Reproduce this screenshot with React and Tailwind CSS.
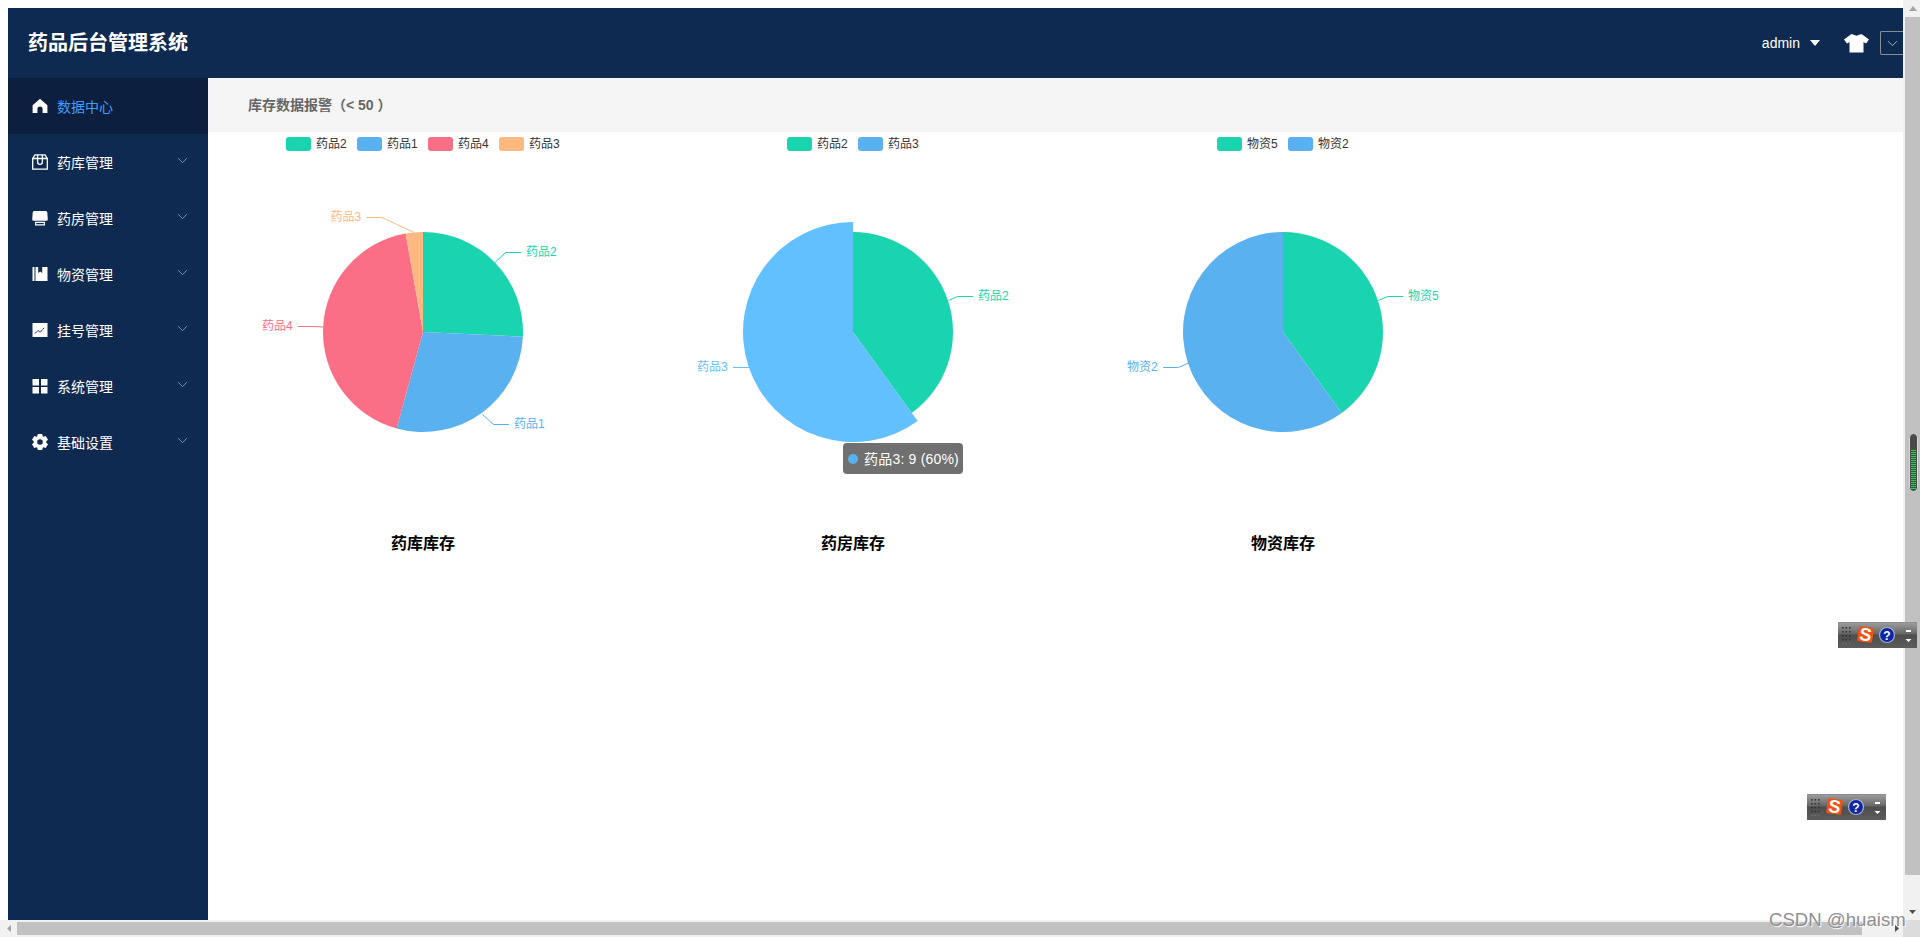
import { ChevronDown } from 'lucide-react'

const TEAL = '#19d4ae'
const BLUE = '#5ab1ef'
const PINK = '#fa6e86'
const ORANGE = '#ffb980'
const HOVER_BLUE = '#62c0ff'

const FONT = "font-['Liberation_Sans','Noto_Sans_CJK_SC',sans-serif]"

// angle is degrees clockwise from 12 o'clock
function slicePath(cx, cy, r, from, to) {
  const point = (deg) => {
    const rad = ((deg - 90) * Math.PI) / 180
    return [cx + r * Math.cos(rad), cy + r * Math.sin(rad)]
  }
  const [x1, y1] = point(from)
  const [x2, y2] = point(to)
  const large = to - from > 180 ? 1 : 0
  return `M${cx} ${cy}L${x1} ${y1}A${r} ${r} 0 ${large} 1 ${x2} ${y2}Z`
}

const charts = [
  {
    title: '药库库存',
    legend: [
      { name: '药品2', color: TEAL, x: 78 },
      { name: '药品1', color: BLUE, x: 149 },
      { name: '药品4', color: PINK, x: 220 },
      { name: '药品3', color: ORANGE, x: 291 },
    ],
    slices: [
      { color: TEAL, from: 0, to: 92.7 },
      { color: BLUE, from: 92.7, to: 195.3 },
      { color: PINK, from: 195.3, to: 350 },
      { color: ORANGE, from: 350, to: 360 },
    ],
    labels: [
      { name: '药品2', color: TEAL, line: '287,130.5 297.5,120.5 313,120.5', x: 318, y: 120, anchor: 'start' },
      { name: '药品1', color: BLUE, line: '274.5,282.5 285.5,292.5 301,292.5', x: 306, y: 292, anchor: 'start' },
      { name: '药品4', color: PINK, line: '115.5,195 105.5,194.5 90,194.5', x: 84.7, y: 194, anchor: 'end' },
      { name: '药品3', color: ORANGE, line: '206,100.5 174,85.5 158.5,85.5', x: 153.3, y: 85, anchor: 'end' },
    ],
  },
  {
    title: '药房库存',
    legend: [
      { name: '药品2', color: TEAL, x: 149 },
      { name: '药品3', color: BLUE, x: 220 },
    ],
    slices: [
      { color: TEAL, from: 0, to: 144 },
      { color: HOVER_BLUE, from: 144, to: 360, r: 110 },
    ],
    labels: [
      { name: '药品2', color: TEAL, line: '310.5,168.5 319.5,164.5 335,164.5', x: 340, y: 164, anchor: 'start' },
      { name: '药品3', color: HOVER_BLUE, line: '111,235.5 95,235.5', x: 89.7, y: 235, anchor: 'end' },
    ],
    tooltip: '药品3: 9 (60%)',
  },
  {
    title: '物资库存',
    legend: [
      { name: '物资5', color: TEAL, x: 149 },
      { name: '物资2', color: BLUE, x: 220 },
    ],
    slices: [
      { color: TEAL, from: 0, to: 144 },
      { color: BLUE, from: 144, to: 360 },
    ],
    labels: [
      { name: '物资5', color: TEAL, line: '310.5,168.5 319.5,164.5 335,164.5', x: 340, y: 164, anchor: 'start' },
      { name: '物资2', color: BLUE, line: '120.5,231 110.5,235.5 95,235.5', x: 89.7, y: 235, anchor: 'end' },
    ],
  },
]

function PieChart({ chart }) {
  return (
    <div className="w-[430px] shrink-0">
      <div className="relative h-[400px]">
        <svg width="430" height="400" viewBox="0 0 430 400" className="block">
          {chart.legend.map((item) => (
            <g key={item.name}>
              <rect x={item.x} y="5" width="25" height="14" rx="3" fill={item.color} />
              <text x={item.x + 30} y="12" dominantBaseline="central" fontSize="12" fill="#333">
                {item.name}
              </text>
            </g>
          ))}
          {chart.labels.map((label) => (
            <g key={label.name}>
              <polyline points={label.line} fill="none" stroke={label.color} strokeWidth="1" />
              <text x={label.x} y={label.y} textAnchor={label.anchor} dominantBaseline="central" fontSize="12" fill={label.color}>
                {label.name}
              </text>
            </g>
          ))}
          {chart.slices.map((slice) => (
            <path key={slice.from} d={slicePath(215, 200, slice.r || 100, slice.from, slice.to)} fill={slice.color} />
          ))}
        </svg>
        {chart.tooltip && (
          <div className="absolute left-[205px] top-[311px] flex h-[31px] w-[120px] items-center rounded bg-[#707070] pl-[5px] text-sm tracking-[0.2px] whitespace-nowrap text-white">
            <span className="mr-[6px] h-[10px] w-[10px] rounded-full bg-[#5ab1ef]" />
            {chart.tooltip}
          </div>
        )}
      </div>
      <div className="h-[22px] pt-[1px] text-center text-base leading-[22px] font-bold text-black">{chart.title}</div>
    </div>
  )
}

const HomeIcon = () => (
  <svg width="16" height="16" viewBox="0 0 16 16" fill="#fff">
    <path d="M8 .8 15.4 7.2V15H10.6V11A2.6 2.6 0 0 0 5.4 11V15H.6V7.2Z" />
  </svg>
)
const BagIcon = () => (
  <svg width="16" height="16" viewBox="0 0 16 16" fill="none" stroke="#fff" strokeWidth="1.3">
    <path d="M3 .8H13L15.3 4.5V15.2H.7V4.5ZM.7 4.5H15.3M5.6 .8V8A2.4 2.4 0 0 0 10.4 8V.8" />
  </svg>
)
const ShopIcon = () => (
  <svg width="16" height="16" viewBox="0 0 16 16" fill="#fff">
    <path d="M2.2 1H13.8A1.5 1.5 0 0 1 15.3 2.5L15.8 9.8A1.5 1.5 0 0 1 14.5 10.8H1.5A1.5 1.5 0 0 1 .2 9.8L.7 2.5A1.5 1.5 0 0 1 2.2 1Z" />
    <path d="M3 11.8H13V15.5H3ZM4.2 13V14.3H11.8V13Z" fillRule="evenodd" />
  </svg>
)
const BookIcon = () => (
  <svg width="16" height="16" viewBox="0 0 16 16" fill="#fff">
    <path d="M.5 1H2.5V15H.5ZM3.5 1H6.2V7L8.2 5.5 10.2 7V1H15.5V15H3.5Z" />
  </svg>
)
const LineIcon = () => (
  <svg width="16" height="16" viewBox="0 0 16 16">
    <rect x=".5" y="1" width="15" height="14" fill="#fff" />
    <path d="M3 11.5 6 8.5 8.3 10.3 12 5.8" fill="none" stroke="#0f2a50" strokeWidth="1" strokeDasharray="3 .6" />
  </svg>
)
const GridIcon = () => (
  <svg width="16" height="16" viewBox="0 0 16 16" fill="#fff">
    <rect x=".5" y="1" width="6.5" height="6.5" />
    <rect x="9" y="1" width="6.5" height="6.5" />
    <rect x=".5" y="9" width="6.5" height="6.5" />
    <rect x="9" y="9" width="6.5" height="6.5" />
  </svg>
)
const GearIcon = () => (
  <svg width="16" height="16" viewBox="0 0 16 16">
    <path
      fill="#fff"
      fillRule="evenodd"
      d="M5.8 0H10.2L10.7 2.2 11.5 2.7 13.7 2 16 5.8 14.3 7.3V8.7L16 10.2 13.7 14 11.5 13.3 10.7 13.8 10.2 16H5.8L5.3 13.8 4.5 13.3 2.3 14 0 10.2 1.7 8.7V7.3L0 5.8 2.3 2 4.5 2.7 5.3 2.2ZM8 5.2A2.8 2.8 0 1 0 8 10.8 2.8 2.8 0 1 0 8 5.2Z"
    />
  </svg>
)

const menu = [
  { name: '数据中心', icon: HomeIcon, active: true },
  { name: '药库管理', icon: BagIcon },
  { name: '药房管理', icon: ShopIcon },
  { name: '物资管理', icon: BookIcon },
  { name: '挂号管理', icon: LineIcon },
  { name: '系统管理', icon: GridIcon },
  { name: '基础设置', icon: GearIcon },
]

function Sidebar() {
  return (
    <aside className="w-[200px] shrink-0 bg-[#0f2a50]">
      {menu.map(({ name, icon: Icon, active }) => (
        <div key={name} className={`flex h-[56px] items-center pl-[24px] text-sm ${active ? 'bg-[#0c1f3e] text-[#409eff]' : 'text-white'}`}>
          <Icon />
          <span className="ml-[9px] pt-[1px]">{name}</span>
          {!active && <ChevronDown size={17} strokeWidth={1.3} className="mb-[4px] ml-[61px] text-[#8d99ab]" />}
        </div>
      ))}
    </aside>
  )
}

function Header() {
  return (
    <header className="flex h-[70px] shrink-0 items-center overflow-hidden bg-[#0f2a50] pl-[20px] text-white">
      <h1 className="text-xl font-bold">药品后台管理系统</h1>
      <div className="ml-auto flex items-center">
        <span className="text-sm">admin</span>
        <svg width="10" height="6" viewBox="0 0 10 6" className="ml-[10px]" fill="#fff">
          <path d="M0 0H10L5 6Z" />
        </svg>
        <svg width="25" height="19" viewBox="0 0 25 19" className="ml-[24px]" fill="#fff">
          <path d="M7.5 0 12.5 1.8 17.5 0 25 5.5 22 9.5 19.5 8V18.5H5.5V8L3 9.5 0 5.5Z" />
        </svg>
        <div className="ml-[11px] flex h-[24px] w-[23px] items-center justify-center rounded-l-[2px] border border-r-0 border-[#8a8f96]">
          <ChevronDown size={17} strokeWidth={1.3} className="text-[#aeb7c4]" />
        </div>
      </div>
    </header>
  )
}

function VerticalScrollbar() {
  return (
    <div className="flex w-[17px] shrink-0 flex-col bg-[#f1f1f1] pl-[2px]">
      <div className="flex h-[17px] items-center justify-center">
        <svg width="8" height="5" viewBox="0 0 8 5" fill="#a3a3a3">
          <path d="M4 0 8 5H0Z" />
        </svg>
      </div>
      <div className="h-[858px] bg-[#c1c1c1]" />
      <div className="mt-auto flex h-[17px] items-center justify-center">
        <svg width="7" height="4" viewBox="0 0 7 4" fill="#505050">
          <path d="M0 0H7L3.5 4Z" />
        </svg>
      </div>
    </div>
  )
}

function HorizontalScrollbar() {
  return (
    <div className="flex h-[17px] shrink-0 bg-[#f1f1f1]">
      <div className="flex w-[17px] items-center justify-center">
        <svg width="4" height="7" viewBox="0 0 4 7" fill="#a3a3a3">
          <path d="M4 0V7L0 3.5Z" />
        </svg>
      </div>
      <div className="my-[2px] w-[1845px] bg-[#c1c1c1]" />
      <div className="flex w-[41px] items-center justify-end pr-[4px]">
        <svg width="4" height="7" viewBox="0 0 4 7" fill="#505050">
          <path d="M0 0V7L4 3.5Z" />
        </svg>
      </div>
      <div className="w-[17px] bg-[#dcdcdc]" />
    </div>
  )
}

// floating IME toolbar that sits on top of the page
function ImeBar({ className }) {
  const rows = [0, 1, 2, 3, 4]
  return (
    <div className={`absolute h-[26px] w-[79px] ${className}`}>
      <svg width="79" height="26" viewBox="0 0 79 26" className="block">
        <defs>
          <linearGradient id="imeBg" x1="0" y1="0" x2="0" y2="1">
            <stop offset="0" stopColor="#a0a0a0" />
            <stop offset="0.45" stopColor="#686868" />
            <stop offset="0.5" stopColor="#4e4e4e" />
            <stop offset="1" stopColor="#5c5c5c" />
          </linearGradient>
        </defs>
        <rect width="79" height="26" fill="url(#imeBg)" />
        <rect width="79" height="1" fill="#8c8c8c" />
        {rows.map((row) =>
          [0, 1, 2].map((col) => (
            <rect key={`${row}-${col}`} x={4 + col * 3.5} y={5 + row * 3.9} width="1.6" height="1.6" fill={row === 4 ? '#6e6e6e' : '#333'} />
          )),
        )}
        <g transform="rotate(8 27 12.5)">
          <rect x="20" y="5" width="15" height="15" rx="1.5" fill="#f4500f" />
          <text x="27.5" y="18.5" textAnchor="middle" fontSize="18" fontWeight="700" fill="#fff" fontFamily="Liberation Sans">
            S
          </text>
        </g>
        <circle cx="49" cy="13" r="7.5" fill="#0f25a8" stroke="#a4b4c6" strokeWidth="1.2" />
        <text x="49" y="17.5" textAnchor="middle" fontSize="12" fontWeight="700" fill="#fff" fontFamily="Liberation Sans">
          ?
        </text>
        <rect x="68" y="8" width="5" height="2" fill="#fff" />
        <path d="M67.5 17H73.5L70.5 20Z" fill="#fff" />
      </svg>
    </div>
  )
}

function ScrollGauge() {
  const stripes = Array.from({ length: 20 }, (_, i) => 450 + i * 2)
  return (
    <div className="absolute left-[1909px] top-[433px]">
      <svg width="9" height="59" viewBox="0 0 9 59" className="block">
        <rect x=".5" y=".5" width="8" height="58" rx="4" fill="#4a4a4a" stroke="#d8d8d8" />
        {stripes.map((y) => (
          <rect key={y} x="2" y={y - 433} width="5" height="1" fill="#17d94f" />
        ))}
      </svg>
    </div>
  )
}

export default function App() {
  return (
    <div className={`relative flex h-[937px] w-[1920px] flex-col overflow-hidden bg-white ${FONT}`}>
      <div className="flex min-h-0 flex-1">
        <div className="flex min-w-0 flex-1 flex-col pt-2 pl-2">
          <Header />
          <div className="flex min-h-0 flex-1">
            <Sidebar />
            <main className="min-w-0 flex-1">
              <div className="flex h-[54px] items-center bg-[#f5f5f5] pl-[40px] text-sm font-bold text-[#666]">库存数据报警（&lt; 50 ）</div>
              <div className="flex">
                {charts.map((chart) => (
                  <PieChart key={chart.title} chart={chart} />
                ))}
              </div>
            </main>
          </div>
        </div>
        <VerticalScrollbar />
      </div>
      <HorizontalScrollbar />

      <ScrollGauge />
      <ImeBar className="left-[1838px] top-[622px]" />
      <ImeBar className="left-[1807px] top-[794px]" />
      <div className="absolute left-[1769px] top-[909px] text-[18.6px] leading-[22px] whitespace-nowrap text-[#8f8f8f] [text-shadow:1px_1px_1px_#fff]">
        CSDN @huaism
      </div>
    </div>
  )
}
